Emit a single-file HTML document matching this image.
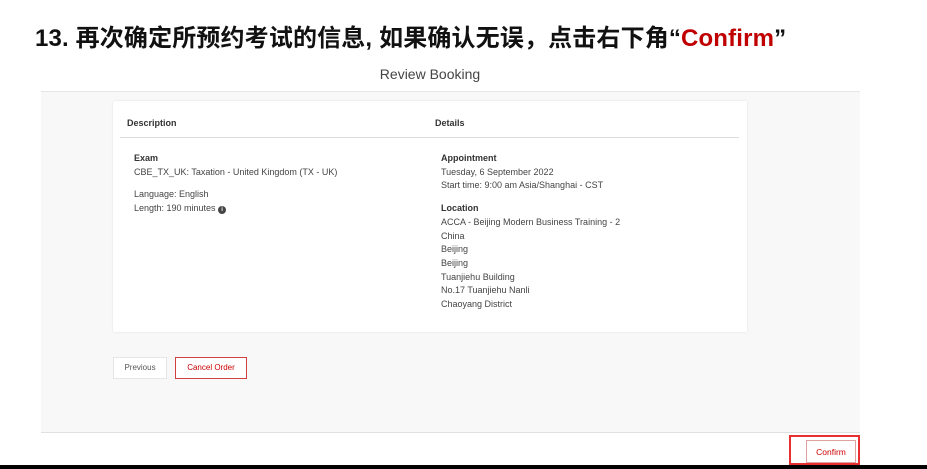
<!DOCTYPE html>
<html><head><meta charset="utf-8"><style>
*{margin:0;padding:0;box-sizing:border-box}
body{width:927px;height:469px;background:#fff;position:relative;overflow:hidden;font-family:"Liberation Sans",Arial,sans-serif;color:#333}
.abs{position:absolute}
h1{position:absolute;left:35px;top:18px;font-family:"Liberation Sans","Noto Sans CJK SC",sans-serif;font-size:24px;font-weight:bold;color:#111;letter-spacing:0.15px;white-space:nowrap}
h1 span{color:#c00000}
.t{font-size:9px;color:#444;line-height:13.7px}
.b{font-weight:bold;color:#333}
</style></head><body>
<h1>13. 再次确定所预约考试的信息, 如果确认无误，点击右下角“<span>Confirm</span>”</h1>
<div class="abs" style="left:0;top:66px;width:860px;text-align:center;font-size:14px;color:#444">Review Booking</div>
<div class="abs" style="left:41px;top:91px;width:819px;height:342px;background:#f8f8f8;border-top:1px solid #e6e6e6;border-bottom:1px solid #e0e0e0"></div>
<div class="abs" style="left:113px;top:101px;width:634px;height:231px;background:#fff;box-shadow:0 0 2px rgba(0,0,0,.1);border-radius:2px"></div>
<div class="abs t b" style="left:127px;top:117px">Description</div>
<div class="abs t b" style="left:435px;top:117px">Details</div>
<div class="abs" style="left:120px;top:137px;width:619px;height:1px;background:#ddd"></div>
<div class="abs t" style="left:134px;top:152px"><div class="b">Exam</div>CBE_TX_UK: Taxation - United Kingdom (TX - UK)<div style="height:9px"></div>Language: English<br>Length: 190 minutes <span style="display:inline-block;width:8px;height:8px;border-radius:50%;background:#444;color:#fff;font-size:6px;line-height:8px;text-align:center;font-weight:bold;vertical-align:0px">i</span></div>
<div class="abs t" style="left:441px;top:152px"><div class="b">Appointment</div>Tuesday, 6 September 2022<br>Start time: 9:00 am Asia/Shanghai - CST<div style="height:9px"></div><div class="b">Location</div>ACCA - Beijing Modern Business Training - 2<br>China<br>Beijing<br>Beijing<br>Tuanjiehu Building<br>No.17 Tuanjiehu Nanli<br>Chaoyang District</div>
<div class="abs" style="left:113px;top:357px;width:54px;height:22px;background:#fff;border:1px solid #e6e6e6;font-size:8px;color:#555;text-align:center;line-height:20px">Previous</div>
<div class="abs" style="left:175px;top:357px;width:72px;height:22px;background:#fff;border:1px solid #d04040;font-size:8px;color:#c00;text-align:center;line-height:20px">Cancel Order</div>
<div class="abs" style="left:789px;top:435px;width:71px;height:30px;border:2px solid #e83030"></div>
<div class="abs" style="left:806px;top:440px;width:50px;height:23px;border:1px solid #e0a0a0;font-size:8.5px;color:#c00;text-align:center;line-height:22px;background:#fff">Confirm</div>
<div class="abs" style="left:0;top:465px;width:927px;height:4px;background:#000"></div>
</body></html>
